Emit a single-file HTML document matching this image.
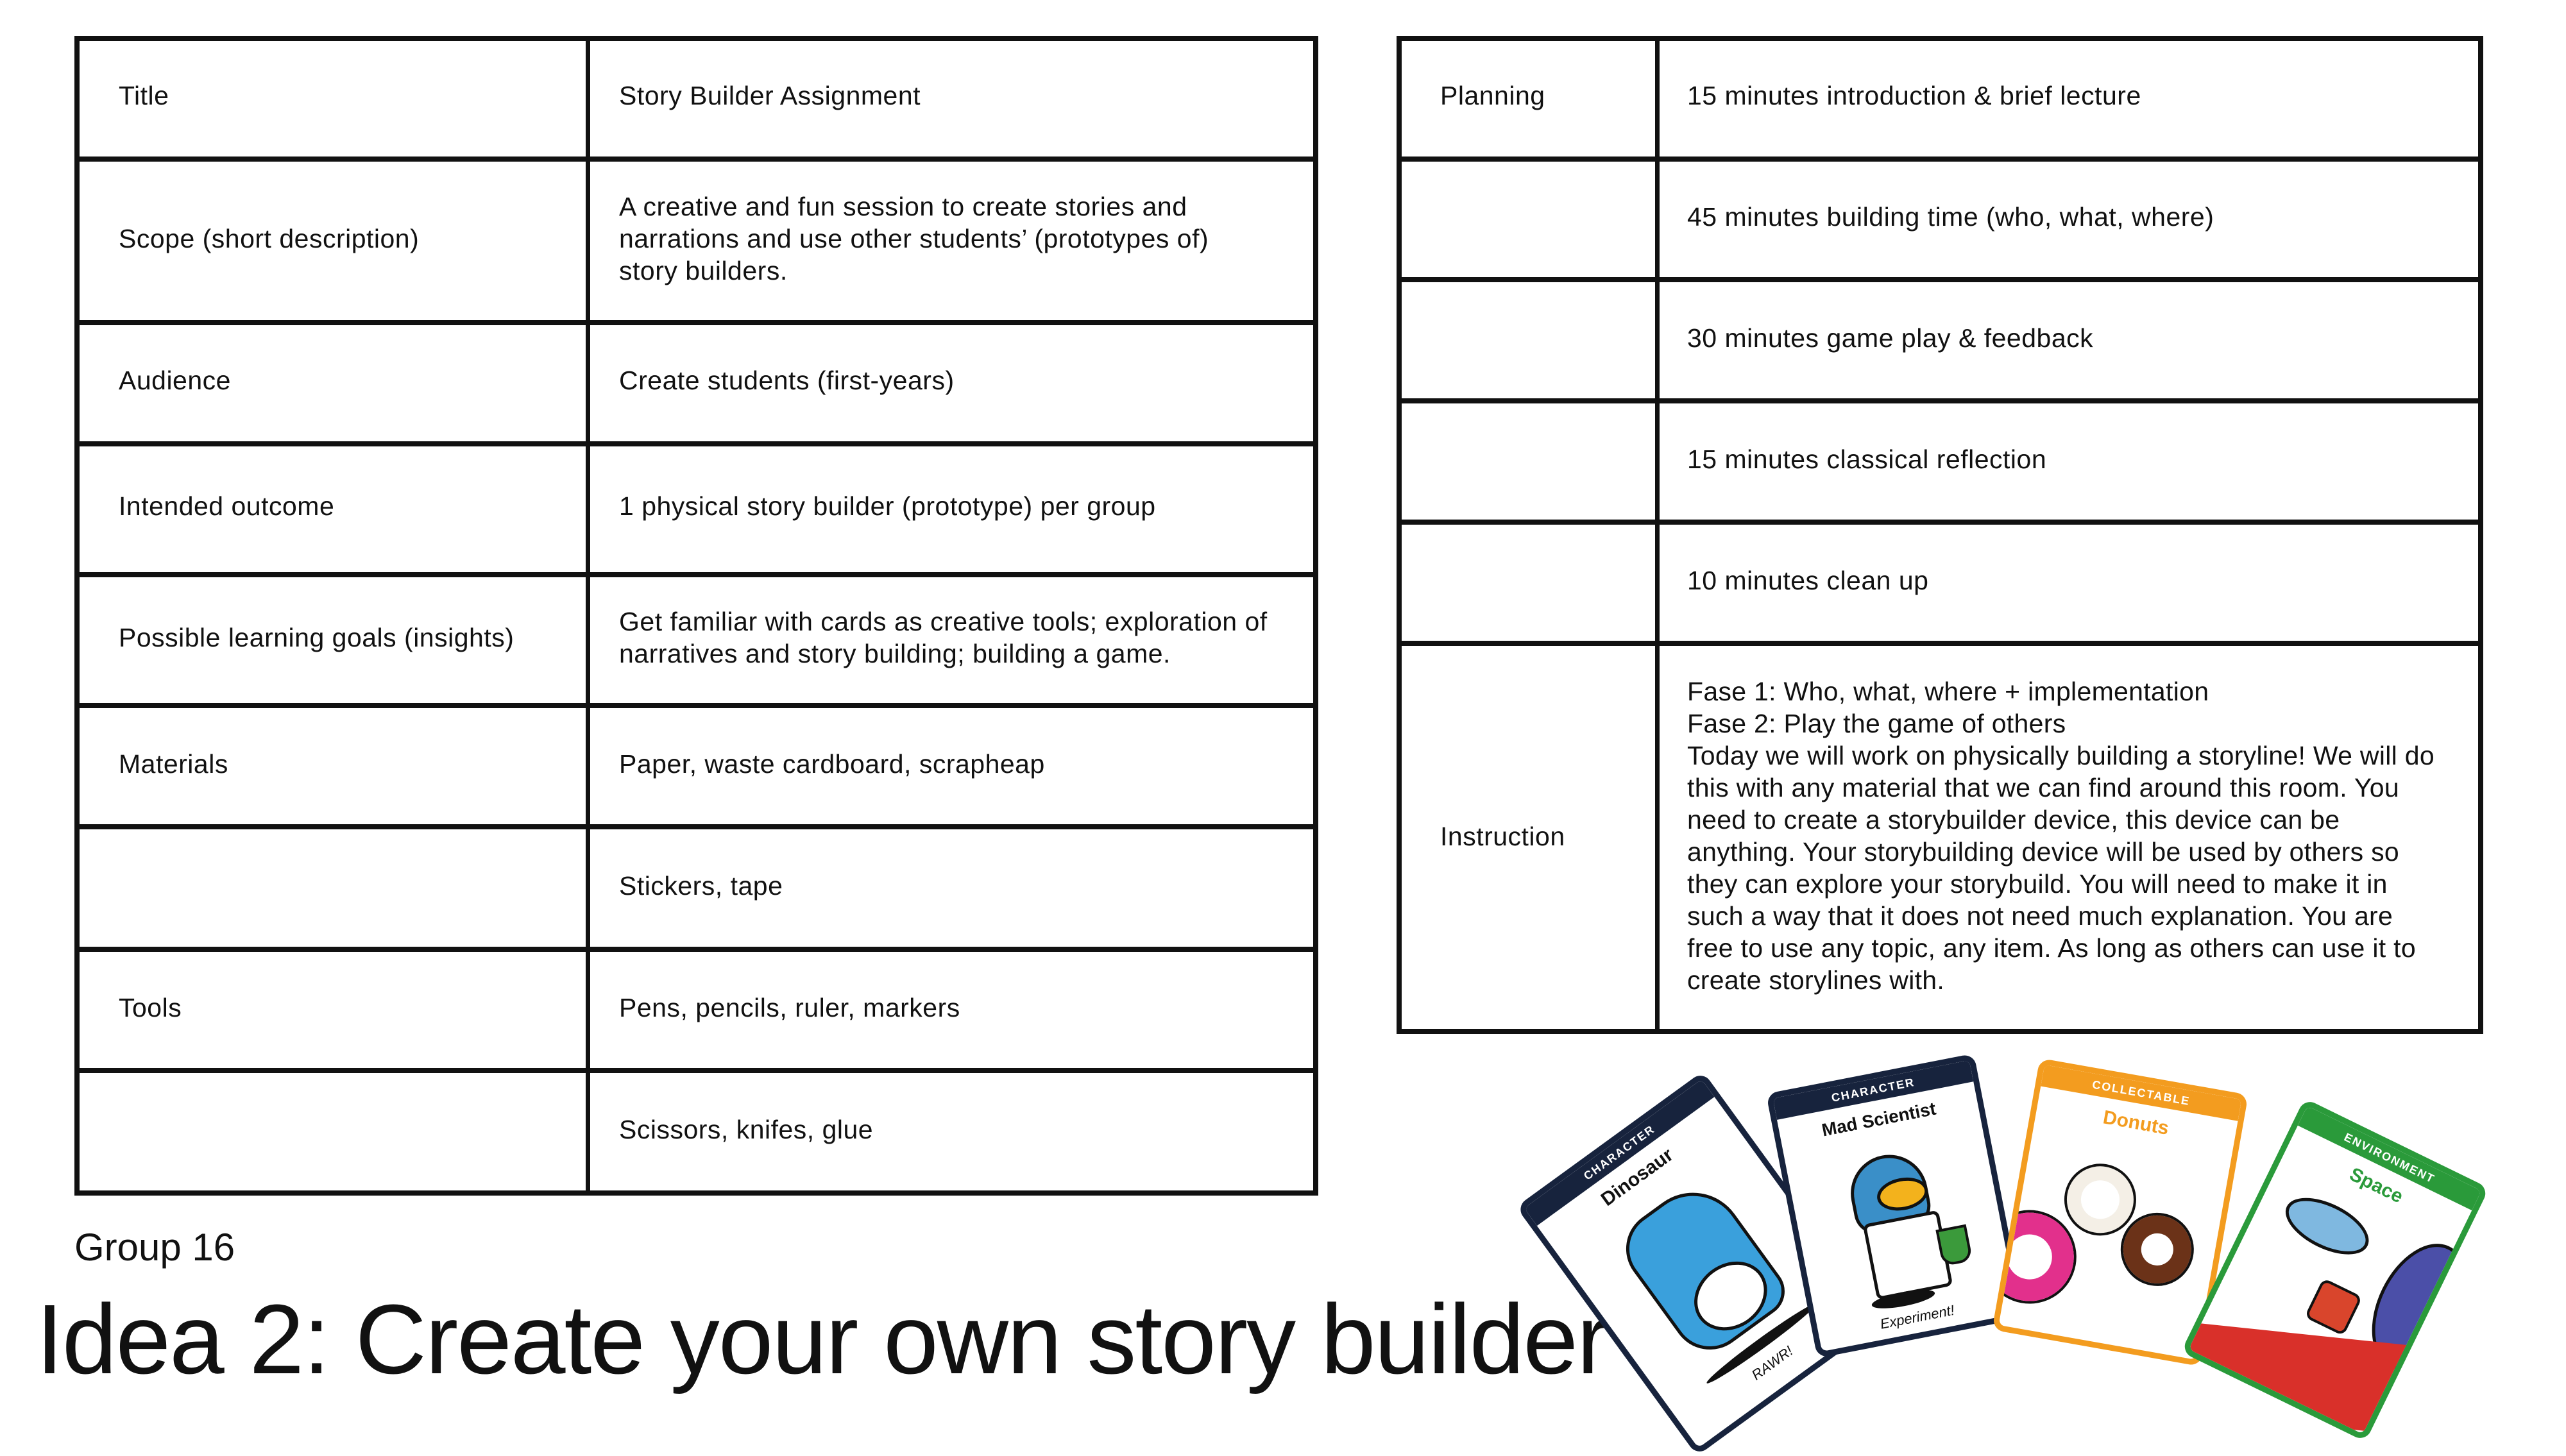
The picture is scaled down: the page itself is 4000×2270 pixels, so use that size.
<!DOCTYPE html>
<html><head><meta charset="utf-8"><style>
html,body{margin:0;padding:0;background:#fff;}
body{width:4000px;height:2250px;position:relative;overflow:hidden;font-family:"Liberation Sans",sans-serif;color:#111;}
.b{position:absolute;background:#111;}
.t{position:absolute;font-size:41px;line-height:50px;white-space:nowrap;letter-spacing:0.5px;}
.card{position:absolute;background:#fff;border-radius:18px;box-sizing:border-box;overflow:hidden;}
.hdr{position:absolute;left:0;right:0;top:0;height:34px;color:#fff;font-size:18px;font-weight:bold;text-align:center;line-height:34px;letter-spacing:2px;}
.ct{position:absolute;left:0;right:0;top:48px;text-align:center;font-weight:bold;font-size:30px;}
</style></head><body>

<!-- Left table -->
<div class="b" style="left:116px;top:56px;width:1939px;height:8px"></div>
<div class="b" style="left:116px;top:244px;width:1939px;height:8px"></div>
<div class="b" style="left:116px;top:499px;width:1939px;height:8px"></div>
<div class="b" style="left:116px;top:688px;width:1939px;height:8px"></div>
<div class="b" style="left:116px;top:892px;width:1939px;height:8px"></div>
<div class="b" style="left:116px;top:1096px;width:1939px;height:8px"></div>
<div class="b" style="left:116px;top:1285px;width:1939px;height:8px"></div>
<div class="b" style="left:116px;top:1476px;width:1939px;height:8px"></div>
<div class="b" style="left:116px;top:1665px;width:1939px;height:8px"></div>
<div class="b" style="left:116px;top:1856px;width:1939px;height:8px"></div>
<div class="b" style="left:116px;top:56px;width:8px;height:1808px"></div>
<div class="b" style="left:913px;top:56px;width:7px;height:1808px"></div>
<div class="b" style="left:2047px;top:56px;width:8px;height:1808px"></div>

<div class="t" style="left:185px;top:124px">Title</div>
<div class="t" style="left:965px;top:124px">Story Builder Assignment</div>
<div class="t" style="left:185px;top:347px">Scope (short description)</div>
<div class="t" style="left:965px;top:297px">A creative and fun session to create stories and<br>narrations and use other students’ (prototypes of)<br>story builders.</div>
<div class="t" style="left:185px;top:568px">Audience</div>
<div class="t" style="left:965px;top:568px">Create students (first-years)</div>
<div class="t" style="left:185px;top:764px">Intended outcome</div>
<div class="t" style="left:965px;top:764px">1 physical story builder (prototype) per group</div>
<div class="t" style="left:185px;top:969px">Possible learning goals (insights)</div>
<div class="t" style="left:965px;top:944px">Get familiar with cards as creative tools; exploration of<br>narratives and story building; building a game.</div>
<div class="t" style="left:185px;top:1166px">Materials</div>
<div class="t" style="left:965px;top:1166px">Paper, waste cardboard, scrapheap</div>
<div class="t" style="left:965px;top:1356px">Stickers, tape</div>
<div class="t" style="left:185px;top:1546px">Tools</div>
<div class="t" style="left:965px;top:1546px">Pens, pencils, ruler, markers</div>
<div class="t" style="left:965px;top:1736px">Scissors, knifes, glue</div>

<!-- Right table -->
<div class="b" style="left:2177px;top:56px;width:1694px;height:8px"></div>
<div class="b" style="left:2177px;top:244px;width:1694px;height:8px"></div>
<div class="b" style="left:2177px;top:432px;width:1694px;height:8px"></div>
<div class="b" style="left:2177px;top:621px;width:1694px;height:8px"></div>
<div class="b" style="left:2177px;top:810px;width:1694px;height:8px"></div>
<div class="b" style="left:2177px;top:999px;width:1694px;height:8px"></div>
<div class="b" style="left:2177px;top:1604px;width:1694px;height:8px"></div>
<div class="b" style="left:2177px;top:56px;width:8px;height:1556px"></div>
<div class="b" style="left:2580px;top:56px;width:7px;height:1556px"></div>
<div class="b" style="left:3863px;top:56px;width:8px;height:1556px"></div>

<div class="t" style="left:2245px;top:124px">Planning</div>
<div class="t" style="left:2630px;top:124px">15 minutes introduction &amp; brief lecture</div>
<div class="t" style="left:2630px;top:313px">45 minutes building time (who, what, where)</div>
<div class="t" style="left:2630px;top:502px">30 minutes game play &amp; feedback</div>
<div class="t" style="left:2630px;top:691px">15 minutes classical reflection</div>
<div class="t" style="left:2630px;top:880px">10 minutes clean up</div>
<div class="t" style="left:2245px;top:1279px">Instruction</div>
<div class="t" style="left:2630px;top:1053px;font-size:41px;letter-spacing:0.3px">Fase 1: Who, what, where + implementation<br>Fase 2: Play the game of others<br>Today we will work on physically building a storyline! We will do<br>this with any material that we can find around this room. You<br>need to create a storybuilder device, this device can be<br>anything. Your storybuilding device will be used by others so<br>they can explore your storybuild. You will need to make it in<br>such a way that it does not need much explanation. You are<br>free to use any topic, any item. As long as others can use it to<br>create storylines with.</div>

<div class="t" style="left:116px;top:1910px;font-size:60px;line-height:70px;letter-spacing:0">Group 16</div>
<div class="t" style="left:56px;top:2003px;font-size:154px;line-height:170px;letter-spacing:-2px">Idea 2: Create your own story builder</div>

<!-- Cards -->
<div class="card" style="left:2470px;top:1730px;width:360px;height:480px;border:9px solid #17233d;transform:rotate(-36deg)">
 <div class="hdr" style="background:#17233d">CHARACTER</div>
 <div class="ct" style="color:#111">Dinosaur</div>
 <div style="position:absolute;left:80px;top:120px;width:170px;height:230px;background:#3aa0dc;border:5px solid #111;border-radius:60px 80px 40px 60px"></div>
 <div style="position:absolute;left:120px;top:250px;width:110px;height:90px;background:#fff;border:5px solid #111;border-radius:50%"></div>
 <div style="position:absolute;left:70px;top:380px;width:210px;height:16px;background:#111;border-radius:50%"></div>
 <div style="position:absolute;left:0;right:0;top:410px;text-align:center;font-style:italic;font-size:22px">RAWR!</div>
</div>
<div class="card" style="left:2790px;top:1670px;width:330px;height:420px;border:9px solid #17233d;transform:rotate(-11deg)">
 <div class="hdr" style="background:#17233d">CHARACTER</div>
 <div class="ct" style="color:#111;font-size:28px">Mad Scientist</div>
 <div style="position:absolute;left:90px;top:120px;width:110px;height:110px;background:#3a8fc8;border:5px solid #111;border-radius:50% 50% 30% 30%"></div>
 <div style="position:absolute;left:130px;top:160px;width:70px;height:40px;background:#f3b21c;border:5px solid #111;border-radius:50%"></div>
 <div style="position:absolute;left:100px;top:220px;width:110px;height:110px;background:#fff;border:5px solid #111;border-radius:10px"></div>
 <div style="position:absolute;left:210px;top:250px;width:40px;height:50px;background:#3b9a3b;border:4px solid #111;border-radius:0 0 20px 20px"></div>
 <div style="position:absolute;left:90px;top:335px;width:100px;height:22px;background:#111;border-radius:50%"></div>
 <div style="position:absolute;left:0;right:0;top:365px;text-align:center;font-style:italic;font-size:22px">Experiment!</div>
</div>
<div class="card" style="left:3140px;top:1675px;width:330px;height:430px;border:9px solid #f39c1f;transform:rotate(10deg)">
 <div class="hdr" style="background:#f39c1f">COLLECTABLE</div>
 <div class="ct" style="color:#f39c1f">Donuts</div>
 <div style="position:absolute;left:70px;top:140px;width:60px;height:60px;border:22px solid #f4efe6;outline:4px solid #111;border-radius:50%"></div>
 <div style="position:absolute;left:170px;top:200px;width:50px;height:50px;border:28px solid #6b3218;border-radius:50%;box-shadow:0 0 0 4px #111"></div>
 <div style="position:absolute;left:-40px;top:230px;width:70px;height:70px;border:34px solid #e2308c;border-radius:50%;box-shadow:0 0 0 4px #111"></div>
</div>
<div class="card" style="left:3480px;top:1760px;width:320px;height:440px;border:9px solid #2a9a3a;transform:rotate(26deg)">
 <div class="hdr" style="background:#2a9a3a">ENVIRONMENT</div>
 <div class="ct" style="color:#2a9a3a">Space</div>
 <div style="position:absolute;left:40px;top:120px;width:130px;height:60px;background:#7fb8e0;border:5px solid #111;border-radius:50%"></div>
 <div style="position:absolute;left:230px;top:100px;width:120px;height:200px;background:#4b4fa8;border:5px solid #111;border-radius:50%"></div>
 <div style="position:absolute;left:-30px;top:320px;width:400px;height:140px;background:#d9302a;transform:rotate(-20deg)"></div>
 <div style="position:absolute;left:140px;top:230px;width:60px;height:60px;background:#d9452c;border:4px solid #111;border-radius:12px"></div>
</div>

</body></html>
